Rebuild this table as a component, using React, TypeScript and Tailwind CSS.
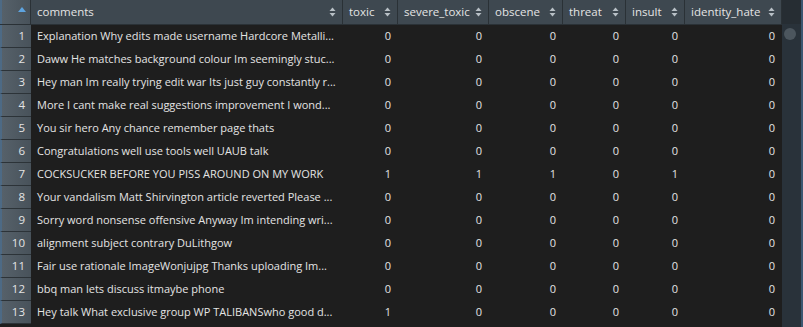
import React from 'react'

type Row = { comment: string; v: number[] }

const COLUMNS = ['toxic', 'severe_toxic', 'obscene', 'threat', 'insult', 'identity_hate']

const ROWS: Row[] = [
  { comment: 'Explanation Why edits made username Hardcore Metalli...', v: [0, 0, 0, 0, 0, 0] },
  { comment: 'Daww He matches background colour Im seemingly stuc...', v: [0, 0, 0, 0, 0, 0] },
  { comment: 'Hey man Im really trying edit war Its just guy constantly r...', v: [0, 0, 0, 0, 0, 0] },
  { comment: 'More I cant make real suggestions improvement I wond...', v: [0, 0, 0, 0, 0, 0] },
  { comment: 'You sir hero Any chance remember page thats', v: [0, 0, 0, 0, 0, 0] },
  { comment: 'Congratulations well use tools well UAUB talk', v: [0, 0, 0, 0, 0, 0] },
  { comment: 'COCKSUCKER BEFORE YOU PISS AROUND ON MY WORK', v: [1, 1, 1, 0, 1, 0] },
  { comment: 'Your vandalism Matt Shirvington article reverted Please ...', v: [0, 0, 0, 0, 0, 0] },
  { comment: 'Sorry word nonsense offensive Anyway Im intending wri...', v: [0, 0, 0, 0, 0, 0] },
  { comment: 'alignment subject contrary DuLithgow', v: [0, 0, 0, 0, 0, 0] },
  { comment: 'Fair use rationale ImageWonjujpg Thanks uploading Im...', v: [0, 0, 0, 0, 0, 0] },
  { comment: 'bbq man lets discuss itmaybe phone', v: [0, 0, 0, 0, 0, 0] },
  { comment: 'Hey talk What exclusive group WP TALIBANSwho good d...', v: [1, 0, 0, 0, 0, 0] },
]

const GRID = 'grid grid-cols-[31px_312px_55px_91px_74px_63px_59px_97px]'

function SortIcon() {
  return (
    <svg width="7" height="10" viewBox="0 0 7 10" className="shrink-0">
      <path d="M3.5 0.5 L6.5 4 L0.5 4 Z" fill="#b8c0c6" />
      <path d="M3.5 9.5 L6.5 6 L0.5 6 Z" fill="#b8c0c6" />
    </svg>
  )
}

function HeaderCell({ label }: { label: string }) {
  return (
    <div className="flex h-[24px] items-center justify-between border-r border-[#2a3136] pl-[6px] pr-[6px]">
      <span>{label}</span>
      <SortIcon />
    </div>
  )
}

export default function App() {
  return (
    <div className="flex h-[327px] w-[803px] overflow-hidden bg-[#1e1e1e] font-['Open_Sans',sans-serif] text-[11px] text-[#e4e4e4]">
      <div className="w-[782px]">
        <div className={`${GRID} border-b border-[#2a3136] bg-[#3e4850] text-[11.5px]`}>
          <div className="flex h-[24px] items-start justify-end border-r border-[#2a3136] border-l-2 border-l-[#4d6a85] bg-gradient-to-r from-[#56616a] to-[#48525a] pr-[4px] pt-[7px]">
            <svg width="8" height="5" viewBox="0 0 8 5">
              <path d="M4 0 L8 5 L0 5 Z" fill="#5ea4e0" />
            </svg>
          </div>
          <HeaderCell label="comments" />
          {COLUMNS.map((c) => (
            <HeaderCell key={c} label={c} />
          ))}
        </div>
        {ROWS.map((r, i) => (
          <div key={i} className={`${GRID} h-[23px] items-center`}>
            <div className="flex h-[23px] items-center justify-end border-b border-[#2c3338] border-l-2 border-l-[#4d6a85] bg-gradient-to-r from-[#56616a] to-[#48525a] pr-[6px] text-[11.5px]">
              {i + 1}
            </div>
            <div className="overflow-hidden whitespace-nowrap pl-[6px]">{r.comment}</div>
            {r.v.map((n, j) => (
              <div key={j} className="pr-[7px] text-right">
                {n}
              </div>
            ))}
          </div>
        ))}
      </div>
      <div className="flex w-[21px] flex-col border-r-2 border-r-[#3b5670]">
        <div className="h-[24px] bg-[#262d33]" />
        <div className="flex-1 bg-[#29323a] pl-[2px] pt-[4px]">
          <div className="h-[12px] w-[12px] rounded-full bg-[#4c565e]" />
        </div>
      </div>
    </div>
  )
}
